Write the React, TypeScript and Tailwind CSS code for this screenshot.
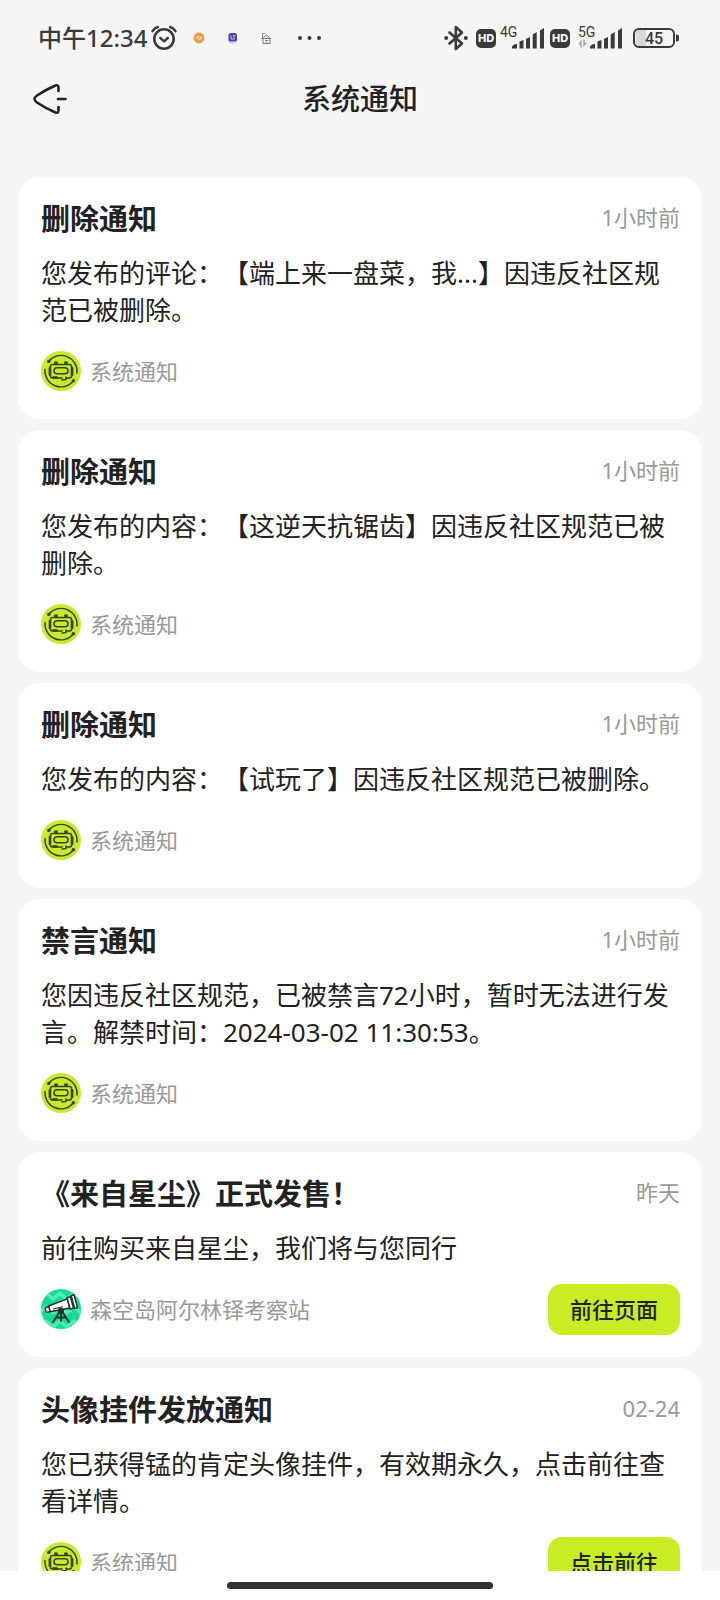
import type { ReactNode } from 'react'

interface Notice {
  id: number
  title: string
  time: string
  body: string
  author: string
  avatar: 'system' | 'station'
  action?: string
}

const NOTICES: Notice[] = [
  { id: 1, title: '删除通知', time: '1小时前', body: '您发布的评论：【端上来一盘菜，我...】因违反社区规范已被删除。', author: '系统通知', avatar: 'system' },
  { id: 2, title: '删除通知', time: '1小时前', body: '您发布的内容：【这逆天抗锯齿】因违反社区规范已被删除。', author: '系统通知', avatar: 'system' },
  { id: 3, title: '删除通知', time: '1小时前', body: '您发布的内容：【试玩了】因违反社区规范已被删除。', author: '系统通知', avatar: 'system' },
  { id: 4, title: '禁言通知', time: '1小时前', body: '您因违反社区规范，已被禁言72小时，暂时无法进行发言。解禁时间：2024-03-02 11:30:53。', author: '系统通知', avatar: 'system' },
  { id: 5, title: '《来自星尘》正式发售！', time: '昨天', body: '前往购买来自星尘，我们将与您同行', author: '森空岛阿尔林铎考察站', avatar: 'station', action: '前往页面' },
  { id: 6, title: '头像挂件发放通知', time: '02-24', body: '您已获得锰的肯定头像挂件，有效期永久，点击前往查看详情。', author: '系统通知', avatar: 'system', action: '点击前往' },
]

function SystemAvatar() {
  return (
    <svg viewBox="0 0 40 40" className="size-10 shrink-0" fill="none" stroke="#3a4312" strokeLinecap="round" aria-hidden="true">
      <circle cx="20" cy="20" r="20" fill="#c6eb2d" stroke="none" />
      <path d="M7.5 10.5A16 16 0 0 1 36 22" strokeWidth="1.4" />
      <path d="M32.5 29.8A16 16 0 0 1 4 18.5" strokeWidth="1.4" />
      <circle cx="7.8" cy="10.4" r="1.7" fill="#3a4312" stroke="none" />
      <circle cx="32.4" cy="29.8" r="1.7" fill="#3a4312" stroke="none" />
      {/* head, ears and the speech tail */}
      <path d="M25 27h3.500q2 0 2-2V15.500q0-2-2-2h-17q-2 0-2 2V25q0 2 2 2H21" strokeWidth="1.6" />
      <path d="M25 26v2.500l-4 .5" strokeWidth="1.400" />
      <path d="M15 10.500v2.500M25 10.500v2.500" strokeWidth="3.600" strokeLinecap="butt" />
      <path d="M8.700 17v7M31.300 17v7" strokeWidth="2.200" />
      <path d="M11.500 26.500h5" strokeWidth="2.600" strokeLinecap="butt" />
      <rect x="13" y="16.800" width="14" height="6" rx="3" strokeWidth="1.600" />
    </svg>
  )
}

function StationAvatar() {
  return (
    <svg viewBox="0 0 40 40" className="size-10 shrink-0" fill="none" strokeLinecap="round" strokeLinejoin="round" aria-hidden="true">
      <clipPath id="station-clip">
        <circle cx="20" cy="20" r="20" />
      </clipPath>
      <g clipPath="url(#station-clip)">
        <path d="M0 0h40v40H0z" fill="#16dc92" />
        <path d="M-2 10l7-6 7 6 7-6 7 6 7-6 7 6M-2 24l7-6 7 6 7-6 7 6 7-6 7 6M-2 38l7-6 7 6 7-6 7 6 7-6 7 6" stroke="#4df0b6" strokeWidth="3.500" />
      </g>
      <g stroke="#23332f" strokeWidth="1.500">
        <path d="M20 21L12 33M20 21l8 12M20 21v11M15.500 28.500h9" strokeWidth="2" />
        <g transform="rotate(-15 20 17)">
          <rect x="4" y="14.500" width="5" height="5" rx="1.500" fill="#fff" />
          <path d="M8 13.800l20-2v9.500l-20-1.500z" fill="#fff" />
          <path d="M28 10.500h3.500v12H28zM32.500 9.500h3v13.500h-3z" fill="#fff" />
          <path d="M12 18h9" strokeWidth="1" />
        </g>
        <circle cx="20" cy="21.500" r="2.300" fill="#23332f" />
      </g>
    </svg>
  )
}

function AlarmIcon() {
  return (
    <svg viewBox="0 0 26 26" className="size-[26px]" fill="none" stroke="#3a3a3a" strokeLinecap="round" strokeLinejoin="round" aria-hidden="true">
      <circle cx="13" cy="14" r="9.700" strokeWidth="2.600" />
      <path d="M9.300 13l3.900 3.300 3.600-3.300" strokeWidth="2.400" />
      <path d="M1.500 6.200Q3.500 3 6.800 2M24.500 6.200Q22.500 3 19.200 2" strokeWidth="2.400" />
    </svg>
  )
}

function AppIcons() {
  return (
    <svg viewBox="0 0 80 14" className="h-[14px] w-[80px]" aria-hidden="true">
      <circle cx="6" cy="7" r="5.400" fill="#ee9a40" />
      <path d="M3.500 7.500l2.500-2.500M5.500 9l3.500-3.500M8 9.300l.8-.8" stroke="#fdebd5" strokeWidth="1.300" fill="none" />
      <ellipse cx="39.500" cy="9" rx="5.200" ry="4.200" fill="#c3dcf7" />
      <rect x="35.500" y="2" width="8.500" height="8.500" rx="2.500" fill="#5040a8" />
      <path d="M38 4v4h4M40 4.500h2.500M40 6h2" stroke="#cfc6f5" strokeWidth=".9" fill="none" />
      <g fill="none" stroke="#747b80">
        <path d="M68.500 7.500l5-3.500 4 3.500M70 7.500v5h7v-5M68.500 7.500h9.500" />
        <path d="M69.500 2v4M69.500 2.500h3M72 9.500h3.500M73.700 9.500v3" strokeWidth=".8" />
      </g>
    </svg>
  )
}

function BluetoothIcon() {
  return (
    <svg viewBox="0 0 24 26" className="h-[26px] w-6" fill="none" stroke="#3a3a3a" strokeWidth="2.600" strokeLinecap="round" strokeLinejoin="round" aria-hidden="true">
      <path d="M5.500 7.500L18 18.500l-6.200 5.500V2L18 7.500 5.500 18.500" />
      <circle cx="2.200" cy="13" r="2" fill="#3a3a3a" stroke="none" />
      <circle cx="21.800" cy="13" r="2" fill="#3a3a3a" stroke="none" />
    </svg>
  )
}

function HdBadge() {
  return (
    <span className="flex h-[19px] w-5 items-center justify-center rounded-[5px] bg-[#3a3a3a] font-['Inter',sans-serif] text-[11px] font-extrabold text-[#f5f5f5]">
      HD
    </span>
  )
}

function Signal({ label, data }: { label: string; data?: boolean }) {
  return (
    <svg viewBox="0 0 46 26" className="h-[26px] w-[46px]" fill="#3a3a3a" role="img" aria-label={`${label} 信号`}>
      <text x="0" y="12" fontSize="14" fontFamily="Roboto, sans-serif">{label}</text>
      {data && <path d="M3.800 14.500v8H2.300v-3H0zM5.200 22.500v-8h1.500v3H9z" fill="#a8a8a8" />}
      <path d="M12 23.500v-2q1.500-2.500 4-2.500h1v4.500zM19.500 23.500v-7l4-1.500v8.500zM26 23.500v-9.500l4-2v11.500zM32.700 23.500V9.500l4-2.500v16.500zM40 23.500V5.500l4-2.500v20.500z" />
    </svg>
  )
}

function Battery() {
  return (
    <svg viewBox="0 0 48 22" className="h-[22px] w-12" role="img" aria-label="电量 45">
      <path d="M8 3h6v16H8q-4 0-4-4V7q0-4 4-4z" fill="#d9d9d9" />
      <rect x="2" y="2" width="40" height="18" rx="5" fill="none" stroke="#3a3a3a" strokeWidth="2" />
      <path d="M44 7.500h1q2 0 2 2v3q0 2-2 2h-1z" fill="#3a3a3a" />
      <text x="22" y="16.500" textAnchor="middle" fontSize="16" fontWeight="500" fontFamily="Roboto, sans-serif" fill="#3a3a3a">45</text>
    </svg>
  )
}

function StatusBar() {
  return (
    <div className="flex h-[76px] items-center justify-between pr-10 pl-[38px] text-[#3a3a3a]">
      <div className="flex items-center">
        <span className="mr-1 text-[24px] leading-8 font-medium">中午12:34</span>
        <AlarmIcon />
        <div className="ml-4">
          <AppIcons />
        </div>
        <svg viewBox="0 0 26 6" className="ml-6 h-[6px] w-[26px]" fill="#3a3a3a" aria-hidden="true">
          <circle cx="3" cy="3" r="2" />
          <circle cx="12.500" cy="3" r="2" />
          <circle cx="22" cy="3" r="2" />
        </svg>
      </div>
      <div className="flex items-center">
        <BluetoothIcon />
        <div className="ml-2 flex items-center gap-1">
          <HdBadge />
          <Signal label="4G" />
        </div>
        <div className="ml-1 flex items-center gap-2">
          <HdBadge />
          <Signal label="5G" data />
        </div>
        <div className="ml-2">
          <Battery />
        </div>
      </div>
    </div>
  )
}

function NavBar() {
  return (
    <header className="grid h-[46px] grid-cols-[1fr_auto_1fr] items-center px-[33px]">
      <button type="button" aria-label="返回" className="justify-self-start">
        <svg viewBox="0 0 34 32" className="h-8 w-[34px]" fill="none" stroke="#222" strokeWidth="2.600" strokeLinecap="round" strokeLinejoin="round">
          <path d="M25.500 8V4.500q0-3-3-2Q13 6.500 4 12.500q-5 3.500 0 7Q13 25.500 22.500 29.500q3 1 3-2V24" />
          <path d="M25 16h7.500" />
        </svg>
      </button>
      <h1 className="text-[29px] leading-9 font-medium">系统通知</h1>
    </header>
  )
}

function NoticeCard({ notice, avatar }: { notice: Notice; avatar: ReactNode }) {
  return (
    <article className="rounded-[22px] bg-white pt-6 pr-[22px] pb-[22px] pl-[23px]">
      <div className="flex items-start justify-between">
        <h2 className="text-[29px] leading-9 font-bold">{notice.title}</h2>
        <time className="text-[22px] leading-8 text-[#999]">{notice.time}</time>
      </div>
      <p className="mt-[18px] text-[26px] leading-[37px]">{notice.body}</p>
      <div className="mt-4 flex h-[52px] items-center justify-between">
        <div className="flex items-center gap-[9px]">
          {avatar}
          <span className="text-[22px] leading-8 text-[#999]">{notice.author}</span>
        </div>
        {notice.action && (
          <button type="button" className="h-[51px] rounded-[14px] bg-[#c8ed24] px-[22px] text-[22px] font-medium">
            {notice.action}
          </button>
        )}
      </div>
    </article>
  )
}

export default function App() {
  return (
    <div className="flex h-screen flex-col bg-[#f5f5f5] font-['Noto_Sans','Noto_Sans_CJK_SC',sans-serif] text-[#222] [text-spacing-trim:space-all]" lang="zh-CN">
      <StatusBar />
      <NavBar />
      <main className="mt-[55px] flex min-h-0 flex-1 flex-col gap-[11px] overflow-y-auto px-[18px] [scrollbar-width:none] *:shrink-0">
        {NOTICES.map(n => (
          <NoticeCard key={n.id} notice={n} avatar={n.avatar === 'system' ? <SystemAvatar /> : <StationAvatar />} />
        ))}
      </main>
      {/* Gesture bar */}
      <div className="flex h-[29px] shrink-0 justify-center bg-white pt-[11px]">
        <div className="h-[7px] w-[266px] rounded-full bg-[#333]" />
      </div>
    </div>
  )
}
